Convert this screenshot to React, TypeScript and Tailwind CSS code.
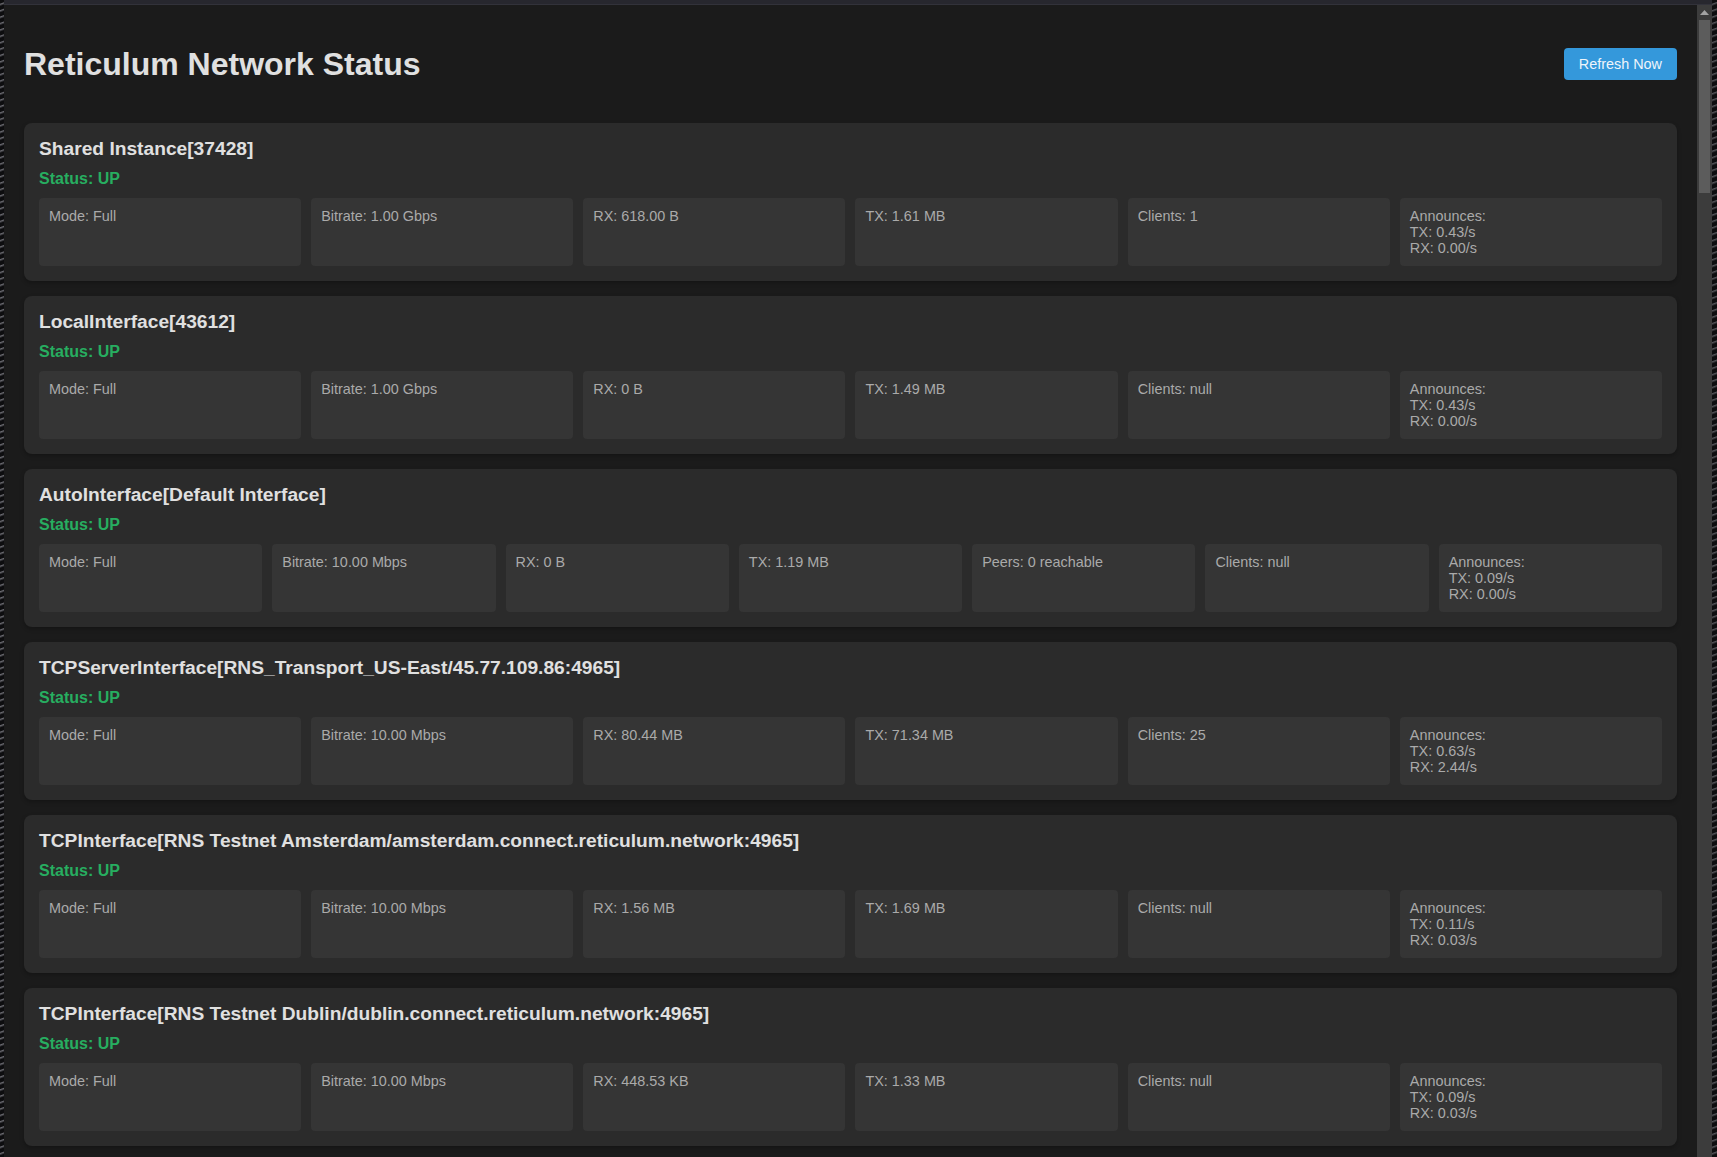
import React from "react";

type Iface = {
  name: string;
  stats: string[][];
};

const data: Iface[] = [
  {
    name: "Shared Instance[37428]",
    stats: [["Mode: Full"], ["Bitrate: 1.00 Gbps"], ["RX: 618.00 B"], ["TX: 1.61 MB"], ["Clients: 1"], ["Announces:", "TX: 0.43/s", "RX: 0.00/s"]],
  },
  {
    name: "LocalInterface[43612]",
    stats: [["Mode: Full"], ["Bitrate: 1.00 Gbps"], ["RX: 0 B"], ["TX: 1.49 MB"], ["Clients: null"], ["Announces:", "TX: 0.43/s", "RX: 0.00/s"]],
  },
  {
    name: "AutoInterface[Default Interface]",
    stats: [["Mode: Full"], ["Bitrate: 10.00 Mbps"], ["RX: 0 B"], ["TX: 1.19 MB"], ["Peers: 0 reachable"], ["Clients: null"], ["Announces:", "TX: 0.09/s", "RX: 0.00/s"]],
  },
  {
    name: "TCPServerInterface[RNS_Transport_US-East/45.77.109.86:4965]",
    stats: [["Mode: Full"], ["Bitrate: 10.00 Mbps"], ["RX: 80.44 MB"], ["TX: 71.34 MB"], ["Clients: 25"], ["Announces:", "TX: 0.63/s", "RX: 2.44/s"]],
  },
  {
    name: "TCPInterface[RNS Testnet Amsterdam/amsterdam.connect.reticulum.network:4965]",
    stats: [["Mode: Full"], ["Bitrate: 10.00 Mbps"], ["RX: 1.56 MB"], ["TX: 1.69 MB"], ["Clients: null"], ["Announces:", "TX: 0.11/s", "RX: 0.03/s"]],
  },
  {
    name: "TCPInterface[RNS Testnet Dublin/dublin.connect.reticulum.network:4965]",
    stats: [["Mode: Full"], ["Bitrate: 10.00 Mbps"], ["RX: 448.53 KB"], ["TX: 1.33 MB"], ["Clients: null"], ["Announces:", "TX: 0.09/s", "RX: 0.03/s"]],
  },
];

function Card({ iface }: { iface: Iface }) {
  const cols = iface.stats.length === 7 ? "grid-cols-7" : "grid-cols-6";
  return (
    <div className="bg-[#2b2b2b] rounded-[8px] p-[15px] mb-[15px] shadow-[0_2px_4px_rgba(0,0,0,0.25)]">
      <h3 className="text-[19.2px] leading-[22px] font-bold text-[#e0e0e0] mb-[10px]">{iface.name}</h3>
      <div className="text-[16px] leading-[18px] font-bold text-[#27ae60] mb-[10px]">Status: UP</div>
      <div className={`grid ${cols} gap-[10px]`}>
        {iface.stats.map((lines, i) => (
          <div key={i} className="bg-[#353535] rounded-[4px] p-[10px] text-[14.4px] leading-[16px] text-[#aaaaaa]">
            {lines.map((l, j) => (
              <div key={j}>{l}</div>
            ))}
          </div>
        ))}
      </div>
    </div>
  );
}

export default function App() {
  return (
    <div className="w-[1717px] h-[1157px] overflow-hidden flex bg-[#111] font-['Liberation_Sans',Arial,sans-serif]">
      <div className="w-[4px] h-full bg-[repeating-linear-gradient(160deg,#0d0d0f_0px,#0d0d0f_3px,#6a6a70_4px,#0d0d0f_6px)]" />
      <div className="flex-1 flex flex-col min-w-0">
        <div className="h-[5px] bg-[#27272e] border-b border-[#32323a]" />
        <div className="flex-1 flex min-h-0">
          <div className="flex-1 overflow-hidden bg-[#1b1b1b] p-[20px]">
            <div className="flex justify-between items-center mb-[20px]">
              <h1 className="my-[21px] text-[32px] leading-[36px] font-bold text-[#e0e0e0]">Reticulum Network Status</h1>
              <button className="bg-[#3498db] text-[#eef4fa] rounded-[4px] px-[15px] py-[8px] text-[14.4px] leading-[16px]">
                Refresh Now
              </button>
            </div>
            {data.map((d, i) => (
              <Card key={i} iface={d} />
            ))}
          </div>
          <div className="w-[15px] bg-[#3c3c3c] flex flex-col items-center">
            <div className="h-[15px] w-full flex items-center justify-center">
              <svg width="9" height="5" viewBox="0 0 9 5">
                <polygon points="4.5,0 9,5 0,5" fill="#a3a3a3" />
              </svg>
            </div>
            <div className="w-[11px] h-[173px] bg-[#5c5c5c]" />
          </div>
        </div>
      </div>
      <div className="w-[5px] h-full bg-[repeating-linear-gradient(160deg,#0d0d0f_0px,#0d0d0f_3px,#55555a_4px,#0d0d0f_6px)]" />
    </div>
  );
}
